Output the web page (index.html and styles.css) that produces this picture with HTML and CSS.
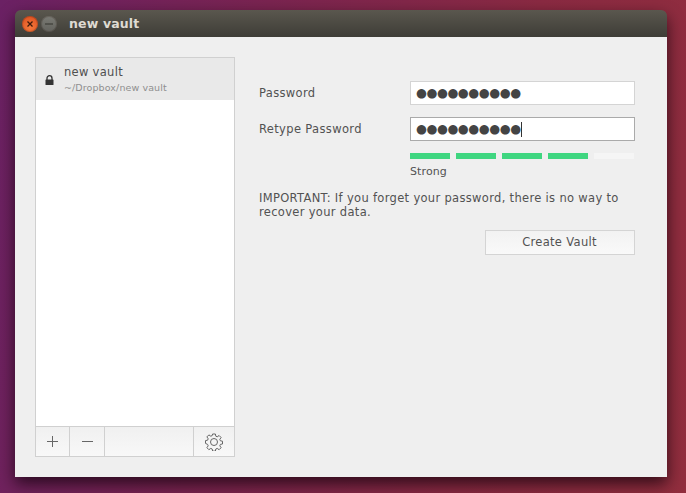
FILE: index.html
```html
<!DOCTYPE html>
<html lang="en">
<head>
<meta charset="utf-8">
<title>new vault</title>
<link rel="stylesheet" href="styles.css">
</head>
<body>
<div class="window">
  <header class="titlebar">
    <span class="wbtn close"><svg width="8" height="8" viewBox="0 0 8 8"><path d="M1.500 1.500l5 5M6.500 1.500l-5 5" stroke="#3f1a0c" stroke-width="1.300"/></svg></span>
    <span class="wbtn min"><svg width="8" height="8" viewBox="0 0 8 8"><path d="M0 4h8" stroke="#34342f" stroke-width="1.200"/></svg></span>
    <span class="wtitle">new vault</span>
  </header>
  <main class="content">
    <aside class="panel">
      <div class="list">
        <div class="vault">
          <svg class="lock" width="9" height="10" viewBox="0 0 9 10"><path d="M2 5V3.2a2.5 2.5 0 0 1 5 0V5" fill="none" stroke="#333" stroke-width="1.3"/><rect x="0.5" y="4.5" width="8" height="5.5" rx="0.6" fill="#333"/></svg>
          <div class="vault-text">
            <div class="vault-name">new vault</div>
            <div class="vault-path">~/Dropbox/new vault</div>
          </div>
        </div>
      </div>
      <div class="toolbar">
        <div class="tool t-add"><svg width="13" height="13" viewBox="0 0 13 13"><path d="M6.5 1v11M1 6.5h11" stroke="#666" stroke-width="1"/></svg></div>
        <div class="tool t-rem"><svg width="13" height="13" viewBox="0 0 13 13"><path d="M1 6.5h11" stroke="#666" stroke-width="1"/></svg></div>
        <div class="tool t-gap"></div>
        <div class="tool t-gear"><svg width="18" height="18" viewBox="0 0 18 18"><path d="M7.6 1h2.8l.4 2.2 1.4.6 1.9-1.3 2 2-1.3 1.9.6 1.4 2.1.4v2.8l-2.1.4-.6 1.4 1.3 1.9-2 2-1.9-1.3-1.4.6-.4 2.1H7.6l-.4-2.1-1.4-.6-1.9 1.3-2-2 1.3-1.9-.6-1.4L.5 10.400V7.600l2.100-.4.6-1.400-1.300-1.900 2-2 1.900 1.300 1.400-.6z" fill="none" stroke="#666" stroke-width="1"/><circle cx="9" cy="9" r="3.500" fill="none" stroke="#666" stroke-width="1"/></svg></div>
      </div>
    </aside>
    <section class="form">
      <div class="row">
        <label class="label">Password</label>
        <div class="field"><span class="dots">●●●●●●●●●●</span></div>
      </div>
      <div class="row">
        <label class="label">Retype Password</label>
        <div class="field focus"><span class="dots">●●●●●●●●●●</span><span class="caret"></span></div>
      </div>
      <div class="meter">
        <span class="seg on"></span><span class="seg on"></span><span class="seg on"></span><span class="seg on"></span><span class="seg"></span>
      </div>
      <div class="strength">Strong</div>
      <p class="note">IMPORTANT: If you forget your password, there is no way to recover your data.</p>
      <div class="actions"><button class="create">Create Vault</button></div>
    </section>
  </main>
</div>
</body>
</html>
```
FILE: styles.css
```css
* { box-sizing: border-box; }
html, body { margin: 0; height: 100%; overflow: hidden; }
body {
  width: 686px;
  height: 493px;
  padding: 10px 19px 16px 15px;
  font-family: "DejaVu Sans", sans-serif;
  color: #525252;
  background: linear-gradient(100deg, #6b2164 0%, #7a2450 35%, #8a2a42 70%, #922e3e 100%);
}
.window {
  height: 467px;
  display: flex;
  flex-direction: column;
  border-radius: 6px 6px 0 0;
  box-shadow: 0 7px 16px 0 rgba(15,0,10,.72);
  overflow: hidden;
}
.titlebar {
  height: 27px;
  flex: none;
  display: flex;
  align-items: center;
  padding-left: 7px;
  gap: 3px;
  background: linear-gradient(#5a574e, #3e3d37);
}
.wbtn {
  width: 16px;
  height: 16px;
  border-radius: 50%;
  display: flex;
  align-items: center;
  justify-content: center;
  box-shadow: inset 0 0 0 1px rgba(40,20,10,.2);
}
.close { background: radial-gradient(circle at 50% 70%, #f47a3c, #d9491c); }
.min { background: linear-gradient(#7a7a74, #62625d); }
.wtitle {
  margin-left: 9px;
  font-size: 12.500px;
  font-weight: 700;
  color: #dfdbd2;
  letter-spacing: .15px;
}
.content {
  flex: 1;
  display: flex;
  padding: 20px 32px 20px 20px;
  background: #efefef;
}
.panel {
  width: 200px;
  display: flex;
  flex-direction: column;
  border: 1px solid #d0d0d0;
}
.list { flex: 1; background: #fff; }
.vault {
  height: 42px;
  display: flex;
  align-items: center;
  padding-left: 9px;
  background: #e9e9e9;
}
.lock { flex: none; margin-top: 1px; }
.vault-text { margin-left: 10px; }
.vault-name { font-size: 11.500px; line-height: 16px; letter-spacing: .3px; color: #4f4f4f; }
.vault-path { font-size: 9.500px; line-height: 13px; margin-top: 1px; letter-spacing: .1px; color: #8f8f8f; }
.toolbar {
  height: 30px;
  flex: none;
  display: flex;
  border-top: 1px solid #d0d0d0;
  background: linear-gradient(#f0f0f0, #f8f8f8);
}
.tool {
  display: flex;
  align-items: center;
  justify-content: center;
  border-right: 1px solid #d0d0d0;
}
.t-add { width: 34px; }
.t-rem { width: 35px; }
.t-gap { flex: 1; }
.t-gear { width: 40px; border-right: 0; }
.form {
  flex: 1;
  margin-left: 24px;
  padding-top: 24px;
  display: flex;
  flex-direction: column;
}
.row {
  display: flex;
  align-items: center;
  justify-content: space-between;
  height: 24px;
  margin-bottom: 12px;
}
.label { font-size: 11.500px; letter-spacing: .35px; }
.field {
  width: 225px;
  height: 24px;
  display: flex;
  align-items: center;
  padding-left: 5px;
  background: #fff;
  border: 1px solid #d4d4d4;
}
.dots {
  font-size: 12.500px;
  letter-spacing: -.44px;
  color: #444;
  line-height: 1;
}
.focus { border-color: #aaa; }
.caret { width: 1px; height: 15px; background: #333; }
.meter {
  display: flex;
  gap: 6px;
  margin-left: 151px;
  height: 6px;
}
.seg { width: 40px; background: #f5f5f5; }
.seg.on { background: #3fd680; }
.strength { margin: 6px 0 0 151px; font-size: 11px; line-height: 13px; letter-spacing: .1px; }
.note {
  margin: 13px 0 0;
  font-size: 11.500px;
  line-height: 14px;
  letter-spacing: .32px;
  width: 376px;
}
.actions { display: flex; justify-content: flex-end; margin-top: 11px; }
.create {
  width: 150px;
  height: 25px;
  padding: 0 1px 2px 0;
  font: 11.500px "DejaVu Sans", sans-serif;
  color: #525252;
  letter-spacing: .32px;
  border: 1px solid #d4d4d4;
  background: linear-gradient(#f2f2f2, #f9f9f9);
}
```
